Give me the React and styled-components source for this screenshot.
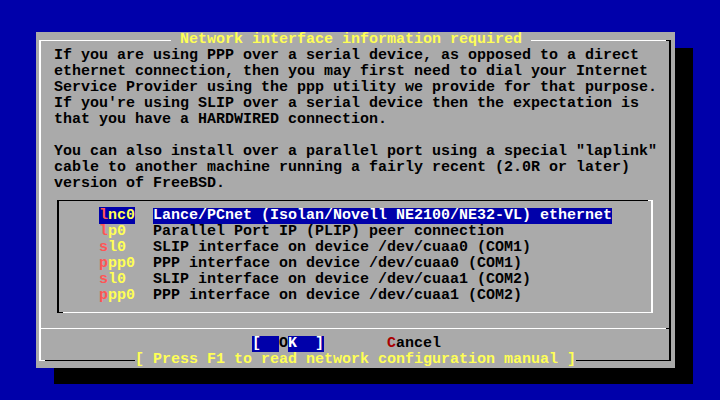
import React from "react";
import styled, { createGlobalStyle } from "styled-components";

const BLUE = "#0000aa";
const GRAY = "#aaaaaa";
const YELLOW = "#ffff55";
const RED = "#ff5555";
const DARK_RED = "#aa0000";

const bodyLines = [
  "If you are using PPP over a serial device, as opposed to a direct",
  "ethernet connection, then you may first need to dial your Internet",
  "Service Provider using the ppp utility we provide for that purpose.",
  "If you're using SLIP over a serial device then the expectation is",
  "that you have a HARDWIRED connection.",
  "",
  'You can also install over a parallel port using a special "laplink"',
  "cable to another machine running a fairly recent (2.0R or later)",
  "version of FreeBSD.",
];

const interfaces = [
  { tag: "lnc0", desc: "Lance/PCnet (Isolan/Novell NE2100/NE32-VL) ethernet" },
  { tag: "lp0", desc: "Parallel Port IP (PLIP) peer connection" },
  { tag: "sl0", desc: "SLIP interface on device /dev/cuaa0 (COM1)" },
  { tag: "ppp0", desc: "PPP interface on device /dev/cuaa0 (COM1)" },
  { tag: "sl0", desc: "SLIP interface on device /dev/cuaa1 (COM2)" },
  { tag: "ppp0", desc: "PPP interface on device /dev/cuaa1 (COM2)" },
];

export default function App() {
  const selected = 0;
  return (
    <>
      <GlobalStyle />
      <Screen>
        <Dialog>
          <Frame>
            <Title>{" Network interface information required "}</Title>
            <Body>{bodyLines.join("\n")}</Body>
            <MenuBox>
              {interfaces.map((item, i) => (
                <Item key={i}>
                  <TagCell>
                    <Tag $selected={i === selected}>
                      <HotKey>{item.tag[0]}</HotKey>
                      {item.tag.slice(1)}
                    </Tag>
                  </TagCell>
                  <Desc $selected={i === selected}>{item.desc}</Desc>
                </Item>
              ))}
            </MenuBox>
            <Divider />
            <ButtonRow>
              <ActiveButton>
                {"[  "}
                <Cursor>O</Cursor>
                {"K  ]"}
              </ActiveButton>
              <Button>
                <ButtonKey>C</ButtonKey>ancel
              </Button>
            </ButtonRow>
            <Help>[ Press F1 to read network configuration manual ]</Help>
          </Frame>
        </Dialog>
      </Screen>
    </>
  );
}

const GlobalStyle = createGlobalStyle`
  body {
    margin: 0;
    background: ${BLUE};
  }
`;

const Screen = styled.div`
  width: 720px;
  height: 400px;
  box-sizing: border-box;
  padding: 32px 0 0 36px;
  background: ${BLUE};
  font-family: "Liberation Mono", "DejaVu Sans Mono", monospace;
  font-size: 15px;
  font-weight: bold;
  line-height: 16px;
  overflow: hidden;
`;

const Dialog = styled.div`
  width: 639px;
  box-sizing: border-box;
  padding: 8px 4px 7px 3px;
  background: ${GRAY};
  box-shadow: 18px 16px 0 #000;
`;

const Frame = styled.div`
  position: relative;
  display: flex;
  flex-direction: column;
  border-style: solid;
  border-width: 1px 2px;
  border-color: #fff #000 #000 #fff;

  &::before {
    content: "";
    position: absolute;
    left: -2px;
    bottom: -1px;
    width: 6px;
    height: 1px;
    background: #fff;
  }
  &::after {
    content: "";
    position: absolute;
    right: -2px;
    top: -1px;
    width: 5px;
    height: 1px;
    background: #000;
  }
`;

const Title = styled.div`
  align-self: flex-start;
  margin: -9px 0 0 130px;
  height: 16px;
  white-space: pre;
  color: ${YELLOW};
  background: ${GRAY};
`;

const Body = styled.div`
  padding-left: 13px;
  height: 144px;
  white-space: pre;
  color: #000;
`;

const MenuBox = styled.div`
  position: relative;
  width: 596px;
  box-sizing: border-box;
  margin: 8px 0 0 16px;
  padding: 7px 0 8px 40px;
  border-style: solid;
  border-width: 1px 2px;
  border-color: #000 #fff #fff #000;

  &::before {
    content: "";
    position: absolute;
    right: -2px;
    top: -1px;
    width: 5px;
    height: 1px;
    background: #fff;
  }
  &::after {
    content: "";
    position: absolute;
    left: -2px;
    bottom: -1px;
    width: 6px;
    height: 1px;
    background: #000;
  }
`;

const Item = styled.div`
  display: flex;
  height: 16px;
  white-space: pre;
`;

const TagCell = styled.div`
  width: 54px;
  flex: none;
`;

const Tag = styled.span`
  color: ${YELLOW};
  background: ${(p) => (p.$selected ? BLUE : "transparent")};
`;

const HotKey = styled.span`
  color: ${RED};
`;

const Desc = styled.span`
  color: ${(p) => (p.$selected ? "#fff" : "#000")};
  background: ${(p) => (p.$selected ? BLUE : "transparent")};
`;

const Divider = styled.div`
  margin-top: 15px;
  height: 1px;
  background: linear-gradient(to right, #fff calc(100% - 3px), #000 0);
`;

const ButtonRow = styled.div`
  display: flex;
  gap: 63px;
  height: 16px;
  margin-top: 7px;
  padding-left: 211px;
  white-space: pre;
`;

const ActiveButton = styled.span`
  color: #fff;
  background: ${BLUE};
`;

const Cursor = styled.span`
  color: #000;
  background: ${GRAY};
`;

const Button = styled.span`
  color: #000;
`;

const ButtonKey = styled.span`
  color: ${DARK_RED};
`;

const Help = styled.div`
  align-self: flex-start;
  margin: 0 0 -8px 94px;
  height: 16px;
  white-space: pre;
  color: ${YELLOW};
  background: ${GRAY};
`;
